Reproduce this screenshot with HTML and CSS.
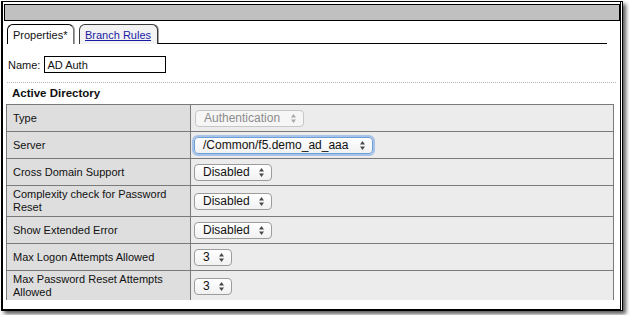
FILE: index.html
```html
<!DOCTYPE html>
<html lang="en">
<head>
    <meta charset="UTF-8">
    <title>Access Policy - AD Auth</title>
    <link rel="stylesheet" href="styles.css">
</head>
<body>
    <div class="frame">
        <div class="pane">
            <div class="title-bar"></div>

            <div class="tabs">
                <div class="tab tab-active">Properties*</div>
                <div class="tab"><a href="#">Branch Rules</a></div>
                <div class="tab-fill"></div>
            </div>

            <div class="content">
                <div class="name-row">
                    <label for="itemName">Name:</label>
                    <input id="itemName" class="name-input" type="text" value="AD Auth">
                </div>

                <div class="dotted-rule"></div>

                <h2 class="section-title">Active Directory</h2>

                <table class="props">
                    <tr>
                        <td class="label">Type</td>
                        <td class="value">
                            <span class="select select-type is-disabled">Authentication<svg class="arrows" width="5" height="9" viewBox="0 0 5 9"><path d="M0 3.5 2.5 0 5 3.5zM0 5.5 2.5 9 5 5.5z"/></svg></span>
                        </td>
                    </tr>
                    <tr>
                        <td class="label">Server</td>
                        <td class="value">
                            <span class="select select-server is-focused">/Common/f5.demo_ad_aaa<svg class="arrows" width="5" height="9" viewBox="0 0 5 9"><path d="M0 3.5 2.5 0 5 3.5zM0 5.5 2.5 9 5 5.5z"/></svg></span>
                        </td>
                    </tr>
                    <tr>
                        <td class="label">Cross Domain Support</td>
                        <td class="value">
                            <span class="select select-mode">Disabled<svg class="arrows" width="5" height="9" viewBox="0 0 5 9"><path d="M0 3.5 2.5 0 5 3.5zM0 5.5 2.5 9 5 5.5z"/></svg></span>
                        </td>
                    </tr>
                    <tr class="row-tall">
                        <td class="label">Complexity check for Password Reset</td>
                        <td class="value">
                            <span class="select select-mode">Disabled<svg class="arrows" width="5" height="9" viewBox="0 0 5 9"><path d="M0 3.5 2.5 0 5 3.5zM0 5.5 2.5 9 5 5.5z"/></svg></span>
                        </td>
                    </tr>
                    <tr>
                        <td class="label">Show Extended Error</td>
                        <td class="value">
                            <span class="select select-mode">Disabled<svg class="arrows" width="5" height="9" viewBox="0 0 5 9"><path d="M0 3.5 2.5 0 5 3.5zM0 5.5 2.5 9 5 5.5z"/></svg></span>
                        </td>
                    </tr>
                    <tr>
                        <td class="label">Max Logon Attempts Allowed</td>
                        <td class="value">
                            <span class="select select-num">3<svg class="arrows" width="5" height="9" viewBox="0 0 5 9"><path d="M0 3.5 2.5 0 5 3.5zM0 5.5 2.5 9 5 5.5z"/></svg></span>
                        </td>
                    </tr>
                    <tr class="row-tall">
                        <td class="label">Max Password Reset Attempts Allowed</td>
                        <td class="value">
                            <span class="select select-num">3<svg class="arrows" width="5" height="9" viewBox="0 0 5 9"><path d="M0 3.5 2.5 0 5 3.5zM0 5.5 2.5 9 5 5.5z"/></svg></span>
                        </td>
                    </tr>
                </table>
            </div>
        </div>
    </div>
</body>
</html>
```

FILE: styles.css
```css
* {
    margin: 0;
    padding: 0;
    box-sizing: border-box;
}

body {
    font-family: 'Liberation Sans', Arial, sans-serif;
    font-size: 11px;
    color: #111;
    background: white;
    width: 630px;
    height: 315px;
    overflow: hidden;
}

/* screenshot frame with drop shadow */
.frame {
    margin: 1px 0 0 1px;
    width: 622px;
    height: 310px;
    border: 1px solid #000;
    background: white;
    box-shadow: 3px 3px 4px rgba(0,0,0,0.65);
}

.pane {
    width: 619px;
    height: 308px;
    border-left: 1px solid #000;
    border-right: 1px solid #000;
    border-bottom: 1px solid #000;
    overflow: hidden;
}

.title-bar {
    margin: 2px 0 0 1px;
    height: 17px;
    background: #c0c0c0;
    border: 1px solid #000;
}

/* tabs */
.tabs {
    display: flex;
    height: 20px;
    margin-top: 3px;
    padding-left: 4px;
    padding-right: 13px;
}

.tab {
    height: 20px;
    padding: 4px 6px 0 5px;
    border: 1px solid #3a3a3a;
    border-bottom: none;
    border-radius: 6px 6px 0 0;
    background: #f3f3f3;
    box-shadow: 1px 0 0 #a0a0a0;
    white-space: nowrap;
}

.tab + .tab {
    margin-left: 5px;
}

.tab-active {
    width: 67px;
    background: white;
    border-color: #000 #777 #000 #000;
}

.tab a {
    color: #1a1aa8;
    text-decoration: underline;
}

.tab-fill {
    flex: 1;
    border-bottom: 1px solid #000;
}

/* form content */
.content {
    height: 256px;
    overflow: hidden;
    padding: 12px 4px 0 5px;
}

.name-row {
    display: flex;
    align-items: center;
    gap: 4px;
    height: 17px;
}

.name-input {
    width: 122px;
    height: 17px;
    border: 1px solid #000;
    padding: 0 2px;
    font-family: 'Liberation Sans', Arial, sans-serif;
    font-size: 11px;
    color: #111;
    outline: none;
}

.dotted-rule {
    margin: 9px 0 0 -1px;
    border-top: 1px dotted #b4b4b4;
}

.section-title {
    margin: 3px 0 4px 4px;
    height: 14px;
    line-height: 14px;
    font-size: 11.5px;
    font-weight: bold;
}

/* property table */
.props {
    width: 608px;
    margin-left: -2px;
    border-collapse: collapse;
}

.props td {
    height: 27px;
    border: 1px solid #7a7a7a;
    line-height: 13px;
    vertical-align: middle;
}

.props .row-tall td {
    height: 31px;
}

.props .label {
    width: 184px;
    padding: 0 8px 0 6px;
    background: #dedede;
}

.props .value {
    padding: 0 0 0 3px;
    background: #ececec;
}

/* mac-style popup buttons */
.select {
    position: relative;
    display: inline-flex;
    align-items: center;
    height: 17px;
    padding-left: 8px;
    border: 1px solid #9c9c9c;
    border-radius: 4px;
    background: linear-gradient(#ffffff, #f1f1f1);
    font-size: 12px;
    color: #111;
    vertical-align: middle;
}

.select .arrows {
    position: absolute;
    right: 7px;
    top: 3px;
    fill: #4a4a4a;
}

.select-type {
    width: 109px;
    margin-left: 1px;
}

.select-server {
    width: 179px;
}

.select-mode {
    width: 78px;
}

.select-num {
    width: 38px;
}

.is-disabled {
    color: #8c8c8c;
    border-color: #c6c6c6;
    background: #f6f6f6;
}

.is-disabled .arrows {
    fill: #a8a8a8;
}

.is-focused {
    border-color: #6f9fd8;
    box-shadow: 0 0 0 2px rgba(110,160,225,0.55);
}
```
